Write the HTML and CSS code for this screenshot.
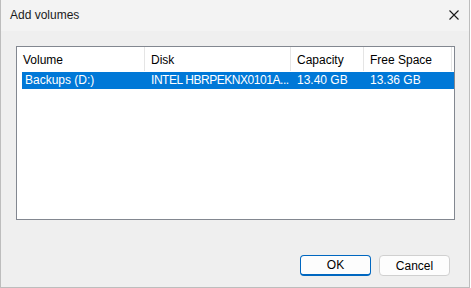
FILE: index.html
```html
<!DOCTYPE html>
<html lang="en">
<head>
    <meta charset="UTF-8">
    <title>Add volumes</title>
    <link rel="stylesheet" href="styles.css">
</head>
<body>
    <div class="window">
        <div class="titlebar">
            <span class="title">Add volumes</span>
            <svg class="close" width="10" height="10" viewBox="0 0 10 10">
                <path d="M0.5 0.5 L9.5 9.5 M9.5 0.5 L0.5 9.5" stroke="#1a1a1a" stroke-width="1.1" fill="none"/>
            </svg>
        </div>
        <div class="content">
            <div class="listview">
                <div class="header">
                    <div class="hcell c1">Volume</div>
                    <div class="hcell c2">Disk</div>
                    <div class="hcell c3">Capacity</div>
                    <div class="hcell c4">Free Space</div>
                </div>
                <div class="row selected">
                    <div class="cell first">Backups (D:)</div>
                    <div class="cell tight">INTEL HBRPEKNX0101A...</div>
                    <div class="cell">13.40 GB</div>
                    <div class="cell">13.36 GB</div>
                </div>
            </div>
            <div class="buttons">
                <button class="btn default">OK</button>
                <button class="btn">Cancel</button>
            </div>
        </div>
    </div>
</body>
</html>
```

FILE: styles.css
```css
body { margin: 0; background: #ffffff; font-family: "Liberation Sans", Arial, sans-serif; font-size: 12px; color: #000; }
.window { width: 468px; height: 287px; border: 1px solid #bdbdbd; border-top: none; display: flex; flex-direction: column; background: #efefef; }
.titlebar { height: 31px; background: #f3f3f3; display: flex; align-items: center; justify-content: space-between; padding: 0 10px 0 9px; }
.title { font-size: 12px; color: #1a1a1a; padding-bottom: 1px; }
.close { margin-bottom: 1px; }
.content { flex: 1; display: flex; flex-direction: column; padding: 15px 15px 11px 15px; }
.listview { width: 437px; height: 172px; border: 1px solid #828790; background: #fff; }
.header { display: flex; height: 24px; }
.hcell { height: 24px; line-height: 26px; padding-left: 6px; box-sizing: border-box; border-right: 1px solid #e5e5e5; color: #000; }
.c1 { width: 128px; }
.c2 { width: 146px; }
.c3 { width: 73px; }
.c4 { width: 88px; }
.row { display: grid; grid-template-columns: 123px 146px 73px 88px; height: 17px; line-height: 17px; margin: 1px 0 0 5px; }
.row.selected { background: #0078d7; color: #fff; }
.cell { padding-left: 6px; white-space: nowrap; }
.cell.first { padding-left: 3px; }
.cell.tight { letter-spacing: -0.45px; }
.buttons { margin-top: auto; display: flex; justify-content: flex-end; gap: 8px; padding-right: 4px; }
.btn { width: 71px; height: 21px; font-family: "Liberation Sans", Arial, sans-serif; font-size: 12px; color: #000; background: #fdfdfd; border: 1px solid #d0d0d0; border-radius: 4px; padding: 0; }
.btn.default { width: 71px; border: 1px solid #0067c0; border-bottom-width: 2px; }
```
